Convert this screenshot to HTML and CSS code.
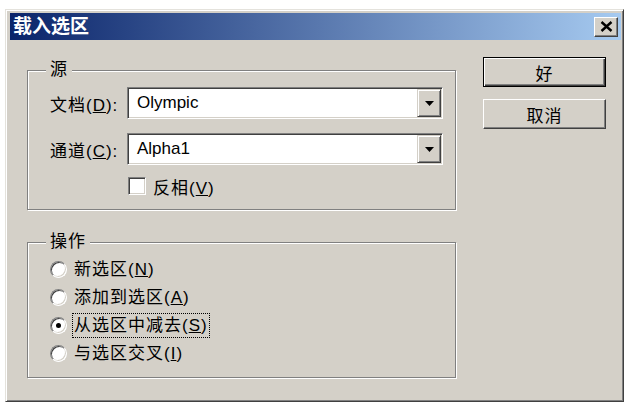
FILE: index.html
```html
<!DOCTYPE html>
<html lang="zh-CN">
<head>
<meta charset="utf-8">
<title>载入选区</title>
<link rel="stylesheet" href="styles.css">
</head>
<body>
<div class="window">
  <div class="titlebar">
    <span class="title">载入选区</span>
    <span class="close"><svg width="13" height="11" viewBox="0 0 13 11"><path d="M1.5 1 L11.5 10 M11.5 1 L1.5 10" stroke="#000" stroke-width="2.4" fill="none"/></svg></span>
  </div>
  <div class="body">
    <div class="left">
      <fieldset class="group group-src">
        <legend>源</legend>
        <div class="row">
          <span class="lbl">文档(<u>D</u>):</span>
          <div class="combo"><span class="val">Olympic</span><span class="drop"><svg width="9" height="5" viewBox="0 0 9 5"><path d="M0 0H9L4.5 5Z" fill="#000"/></svg></span></div>
        </div>
        <div class="row">
          <span class="lbl">通道(<u>C</u>):</span>
          <div class="combo"><span class="val">Alpha1</span><span class="drop"><svg width="9" height="5" viewBox="0 0 9 5"><path d="M0 0H9L4.5 5Z" fill="#000"/></svg></span></div>
        </div>
        <div class="check-row">
          <span class="checkbox"></span>
          <span class="clabel">反相(<u>V</u>)</span>
        </div>
      </fieldset>
      <fieldset class="group group-op">
        <legend>操作</legend>
        <div class="radio-row"><span class="radio"></span><span class="rlabel">新选区(<u>N</u>)</span></div>
        <div class="radio-row"><span class="radio"></span><span class="rlabel">添加到选区(<u>A</u>)</span></div>
        <div class="radio-row"><span class="radio checked"></span><span class="rlabel focus">从选区中减去(<u>S</u>)</span></div>
        <div class="radio-row"><span class="radio"></span><span class="rlabel">与选区交叉(<u>I</u>)</span></div>
      </fieldset>
    </div>
    <div class="buttons">
      <div class="btn default">好</div>
      <div class="btn">取消</div>
    </div>
  </div>
</div>
</body>
</html>
```

FILE: styles.css
```css
body {
  margin: 0;
  background: #fff;
  font-family: "Liberation Sans", "Noto Sans CJK SC", sans-serif;
  font-size: 17px;
  color: #000;
}

.window {
  box-sizing: border-box;
  width: 619px;
  height: 393px;
  margin: 9px 0 0 5px;
  background: #d4d0c8;
  border: 1px solid;
  border-color: #e4e2dc #404040 #404040 #e4e2dc;
  box-shadow: inset 1px 1px 0 #fff, inset -1px -1px 0 #808080;
  padding: 3px 2px 3px 4px;
}

.titlebar {
  height: 27px;
  display: flex;
  align-items: center;
  padding-left: 3px;
  background: linear-gradient(to right, #0a246a, #a6caf0);
}

.title {
  color: #fff;
  font-weight: bold;
  font-size: 19px;
  line-height: 27px;
}

.close {
  margin-left: auto;
  margin-right: 3px;
  box-sizing: border-box;
  width: 24px;
  height: 20px;
  display: flex;
  align-items: center;
  justify-content: center;
  background: #d4d0c8;
  border: 1px solid;
  border-color: #fff #404040 #404040 #fff;
  box-shadow: inset -1px -1px 0 #808080;
}

.body {
  display: flex;
  padding-left: 17px;
}

.left {
  width: 430px;
}

.group {
  box-sizing: border-box;
  width: 429px;
  margin: 0;
  border: 1px solid #808080;
  box-shadow: inset 1px 1px 0 #fff, 1px 1px 0 #fff;
  min-width: 0;
  letter-spacing: 1px;
}

.group legend {
  padding: 0 4px;
  margin-left: -4px;
  line-height: 20px;
  background: #d4d0c8;
}

.group-src {
  margin-top: 20px;
  padding: 7px 0 10px 22px;
}

.group-op {
  margin-top: 22px;
  padding: 3px 0 10px 22px;
}

.row {
  display: flex;
  align-items: center;
  height: 32px;
}

.row + .row {
  margin-top: 14px;
}

.lbl {
  width: 77px;
  flex: none;
}

.combo {
  box-sizing: border-box;
  width: 316px;
  height: 32px;
  display: flex;
  align-items: center;
  background: #fff;
  border: 1px solid;
  border-color: #808080 #fff #fff #808080;
  box-shadow: inset 1px 1px 0 #404040, inset -1px -1px 0 #d4d0c8;
  padding: 1px;
  letter-spacing: 0;
}

.val {
  flex: 1;
  padding-left: 8px;
}

.drop {
  box-sizing: border-box;
  width: 24px;
  height: 28px;
  display: flex;
  align-items: center;
  justify-content: center;
  background: #d4d0c8;
  border: 1px solid;
  border-color: #d4d0c8 #404040 #404040 #d4d0c8;
  box-shadow: inset 1px 1px 0 #fff, inset -1px -1px 0 #808080;
}

.check-row {
  display: flex;
  align-items: center;
  height: 26px;
  margin-top: 8px;
  padding-left: 78px;
}

.checkbox {
  box-sizing: border-box;
  width: 18px;
  height: 18px;
  background: #fff;
  border: 1px solid;
  border-color: #808080 #fff #fff #808080;
  box-shadow: inset 1px 1px 0 #404040, inset -1px -1px 0 #d4d0c8;
}

.clabel {
  margin-left: 7px;
}

.radio-row {
  display: flex;
  align-items: center;
  height: 28px;
}

.radio {
  box-sizing: border-box;
  width: 17px;
  height: 17px;
  border-radius: 50%;
  background: #fff;
  border: 1px solid;
  border-color: #808080 #fff #fff #808080;
  box-shadow: inset 1px 1px 0 #404040, inset -1px -1px 0 #d4d0c8;
  display: flex;
  align-items: center;
  justify-content: center;
  flex: none;
}

.radio.checked::after {
  content: "";
  width: 5px;
  height: 5px;
  border-radius: 50%;
  background: #000;
}

.rlabel {
  margin-left: 5px;
  padding: 0 1px;
  line-height: 23px;
  border: 1px solid transparent;
}

.rlabel.focus {
  border: 1px dotted #000;
}

.buttons {
  margin-left: 26px;
  padding-top: 17px;
}

.btn {
  box-sizing: border-box;
  width: 123px;
  height: 30px;
  display: flex;
  align-items: center;
  justify-content: center;
  background: #d4d0c8;
  border: 1px solid;
  border-color: #fff #404040 #404040 #fff;
  box-shadow: inset -1px -1px 0 #808080;
  letter-spacing: 1px;
  margin-bottom: 12px;
}

.btn.default {
  border-color: #000;
  box-shadow: inset 1px 1px 0 #fff, inset -1px -1px 0 #404040, inset -2px -2px 0 #808080;
}
```
